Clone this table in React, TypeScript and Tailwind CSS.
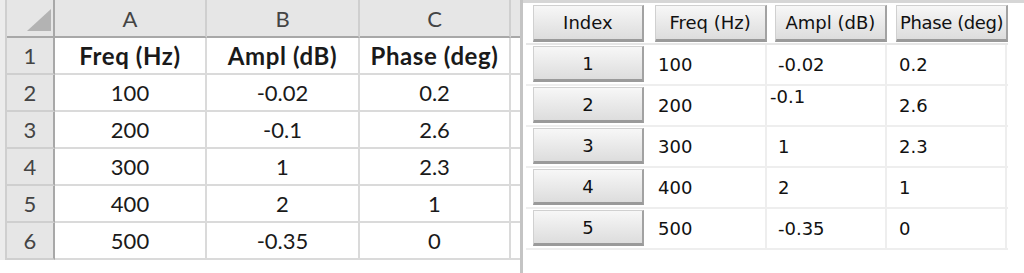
import React from "react";

const rows = [
  { f: "100", a: "-0.02", p: "0.2" },
  { f: "200", a: "-0.1", p: "2.6" },
  { f: "300", a: "1", p: "2.3" },
  { f: "400", a: "2", p: "1" },
  { f: "500", a: "-0.35", p: "0" },
];

const sheetFont = { fontFamily: "Lato, 'Noto Sans', sans-serif" };
const gridFont = { fontFamily: "'DejaVu Sans', Verdana, sans-serif" };

// spreadsheet on the left
function Sheet() {
  const colHead = "flex items-center justify-center bg-[#e6e6e6] border-r-2 border-b-2 border-r-[#cfcfcf] border-b-[#a8a8a8] text-[#444] text-[22px]";
  const rowHead = "flex items-center justify-center bg-[#e6e6e6] border-r-2 border-b-2 border-r-[#a8a8a8] border-b-[#cfcfcf] text-[#444] text-[22px]";
  const cell = "flex items-center justify-center border-r-2 border-b-2 border-[#dadada] text-[#1a1a1a] text-[22px]";

  const body = [
    ["Freq (Hz)", "Ampl (dB)", "Phase (deg)"],
    ...rows.map((r) => [r.f, r.a, r.p]),
  ];

  return (
    <div className="w-[520px] h-full flex flex-col" style={sheetFont}>
      <div className="grid grid-cols-[7px_48px_152px_153px_151px_9px] grid-rows-[38px_repeat(6,37px)]">
        <div className="bg-[#ececec] border-r-2 border-[#cfcfcf]" />
        <div className="relative bg-[#e6e6e6] border-r-2 border-b-2 border-[#a8a8a8]">
          <svg className="absolute left-[20px] top-[9px]" width="24" height="22" viewBox="0 0 24 22">
            <polygon points="24,0 24,22 0,22" fill="#b3b3b3" />
          </svg>
        </div>
        {["A", "B", "C"].map((l) => (
          <div key={l} className={colHead}>{l}</div>
        ))}
        <div className="bg-[#e6e6e6] border-b-2 border-[#a8a8a8]" />

        {body.map((r, i) => (
          <React.Fragment key={i}>
            <div className="bg-[#ececec] border-r-2 border-[#cfcfcf]" />
            <div className={rowHead}>{i + 1}</div>
            {r.map((v, j) => (
              <div key={j} className={`${cell} ${i === 0 ? "font-bold text-[24px] tracking-[0.6px]" : ""}`}>{v}</div>
            ))}
            <div className="border-b-2 border-[#dadada]" />
          </React.Fragment>
        ))}
      </div>
    </div>
  );
}

function GridButton({ children }: { children: React.ReactNode }) {
  return (
    <div className="h-full w-full flex items-center justify-center bg-gradient-to-b from-[#f7f7f7] to-[#dddddd] border-t border-l border-[#d0d0d0] border-r-2 border-b-[3px] border-r-[#a2a2a2] border-b-[#9a9a9a] text-[#111]">
      {children}
    </div>
  );
}

// data grid on the right
function DataGrid() {
  const heads = ["Freq (Hz)", "Ampl (dB)", "Phase (deg)"];
  return (
    <div className="flex-1 h-full border-t-[3px] border-[#d6d6d6] text-[18px]" style={gridFont}>
      <div className="w-[485px] flex flex-col">
        <div className="flex h-[42px] border-b-2 border-[#e6e6e6] ml-[3px]">
          <div className="w-[120px] pl-[7px] pr-[2px] pt-[2px] pb-[1px]">
            <GridButton>Index</GridButton>
          </div>
          {heads.map((h, i) => (
            <div key={h} className={`w-[121px] pt-[2px] pb-[1px] ${i === 1 ? "pl-[8px]" : "pl-[9px]"}`}>
              <GridButton>
                <span className={i === 2 ? "tracking-[-0.4px]" : ""}>{h}</span>
              </GridButton>
            </div>
          ))}
        </div>
        {rows.map((r, i) => (
          <div key={i} className="flex h-[41px] border-b-2 border-[#eeeeee] ml-[3px]">
            <div className="w-[120px] pl-[7px] pr-[2px] pt-[1px] pb-[2px]">
              <GridButton>{i + 1}</GridButton>
            </div>
            <div className="w-[121px] flex items-center pl-[12px] border-r-2 border-[#eeeeee] text-[#111]">{r.f}</div>
            <div className="w-[120px] flex items-center pl-[11px] border-r-2 border-[#eeeeee] text-[#111]">
              <span className={i === 1 ? "-translate-x-[8px] -translate-y-[9px]" : ""}>{r.a}</span>
            </div>
            <div className="w-[120px] flex items-center pl-[12px] border-r-2 border-[#eeeeee] text-[#111]">{r.p}</div>
          </div>
        ))}
      </div>
    </div>
  );
}

export default function App() {
  return (
    <div className="w-[1024px] h-[273px] flex bg-white overflow-hidden">
      <Sheet />
      <div className="w-[3px] h-full bg-[#c4c4c4]" />
      <DataGrid />
    </div>
  );
}
